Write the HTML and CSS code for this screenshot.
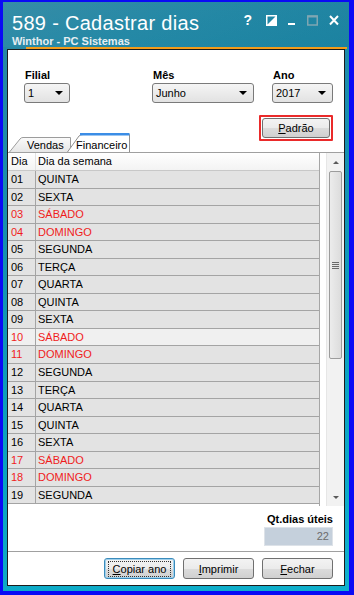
FILE: index.html
```html
<!DOCTYPE html>
<html lang="pt-BR">
<head>
    <meta charset="utf-8">
    <title>589 - Cadastrar dias</title>
    <link rel="stylesheet" href="styles.css">
</head>
<body>
    <div class="window">
        <!-- Title bar -->
        <div class="titlebar">
            <div class="title-text">
                <div class="title">589 - Cadastrar dias</div>
                <div class="subtitle">Winthor - PC Sistemas</div>
            </div>
            <div class="title-controls">
                <span class="help">?</span>
                <svg class="ctl" width="11" height="11" viewBox="0 0 11 11">
                    <rect x="0.75" y="0.75" width="9.5" height="9.5" fill="none" stroke="#fff" stroke-width="1.5"/>
                    <polygon points="1,10 10,1 10,10" fill="#fff"/>
                </svg>
                <svg class="ctl" width="8" height="11" viewBox="0 0 8 11">
                    <rect x="0" y="8" width="7" height="2" fill="#fff"/>
                </svg>
                <svg class="ctl" width="11" height="11" viewBox="0 0 11 11">
                    <rect x="0.75" y="1" width="9.5" height="9" fill="none" stroke="#7fa6b2" stroke-width="1.5"/>
                    <rect x="0.5" y="0.5" width="10" height="2" fill="#7fa6b2"/>
                </svg>
                <svg class="ctl" width="10" height="11" viewBox="0 0 10 11">
                    <path d="M1 1 L9 9.5 M9 1 L1 9.5" stroke="#fff" stroke-width="2"/>
                </svg>
            </div>
        </div>
        <div class="accent"></div>

        <!-- Window body -->
        <div class="content">
            <div class="filters">
                <div class="field filial">
                    <label>Filial</label>
                    <div class="select"><span>1</span><i class="arrow"></i></div>
                </div>
                <div class="field mes">
                    <label>Mês</label>
                    <div class="select"><span>Junho</span><i class="arrow"></i></div>
                </div>
                <div class="field ano">
                    <label>Ano</label>
                    <div class="select"><span>2017</span><i class="arrow"></i></div>
                </div>
            </div>

            <div class="tab-row">
                <div class="tabs">
                    <div class="tab">
                        <svg class="tab-shape" width="62" height="15" viewBox="0 0 62 15">
                            <defs>
                                <linearGradient id="tg" x1="0" y1="0" x2="0" y2="1">
                                    <stop offset="0" stop-color="#fbfbfb"/>
                                    <stop offset="1" stop-color="#e6e6e6"/>
                                </linearGradient>
                            </defs>
                            <path d="M0.5 15 L11 2 Q12 0.5 14 0.5 L61.5 0.5 L61.5 15" fill="url(#tg)" stroke="#9c9c9c"/>
                        </svg>
                        <span>Vendas</span>
                    </div>
                    <div class="tab active">
                        <svg class="tab-shape" width="63" height="19" viewBox="0 0 63 19">
                            <path d="M0.5 19 L12 3 Q13.5 1.5 16 1.5 L62.5 1.5 L62.5 19" fill="#fff" stroke="#8f8f8f"/>
                            <path d="M13 1.2 L62.5 1.2" stroke="#3b8de6" stroke-width="2.4"/>
                        </svg>
                        <span>Financeiro</span>
                    </div>
                </div>
                <div class="default-wrap">
                    <div class="btn"><u>P</u>adrão</div>
                </div>
            </div>

            <!-- Days grid -->
            <div class="grid">
                <div class="table">
                    <div class="row head"><div class="c1">Dia</div><div class="c2">Dia da semana</div></div>
                    <div class="row"><div class="c1">01</div><div class="c2">QUINTA</div></div>
                    <div class="row"><div class="c1">02</div><div class="c2">SEXTA</div></div>
                    <div class="row weekend"><div class="c1">03</div><div class="c2">SÁBADO</div></div>
                    <div class="row weekend"><div class="c1">04</div><div class="c2">DOMINGO</div></div>
                    <div class="row"><div class="c1">05</div><div class="c2">SEGUNDA</div></div>
                    <div class="row"><div class="c1">06</div><div class="c2">TERÇA</div></div>
                    <div class="row"><div class="c1">07</div><div class="c2">QUARTA</div></div>
                    <div class="row"><div class="c1">08</div><div class="c2">QUINTA</div></div>
                    <div class="row"><div class="c1">09</div><div class="c2">SEXTA</div></div>
                    <div class="row weekend hot"><div class="c1">10</div><div class="c2">SÁBADO</div></div>
                    <div class="row weekend"><div class="c1">11</div><div class="c2">DOMINGO</div></div>
                    <div class="row"><div class="c1">12</div><div class="c2">SEGUNDA</div></div>
                    <div class="row"><div class="c1">13</div><div class="c2">TERÇA</div></div>
                    <div class="row"><div class="c1">14</div><div class="c2">QUARTA</div></div>
                    <div class="row"><div class="c1">15</div><div class="c2">QUINTA</div></div>
                    <div class="row"><div class="c1">16</div><div class="c2">SEXTA</div></div>
                    <div class="row weekend"><div class="c1">17</div><div class="c2">SÁBADO</div></div>
                    <div class="row weekend"><div class="c1">18</div><div class="c2">DOMINGO</div></div>
                    <div class="row"><div class="c1">19</div><div class="c2">SEGUNDA</div></div>
                </div>
                <div class="scrollbar">
                    <div class="sb-btn"><i class="up"></i></div>
                    <div class="thumb"><i class="grip"></i></div>
                    <div class="track"></div>
                    <div class="sb-btn"><i class="down"></i></div>
                </div>
            </div>

            <div class="summary">
                <label>Qt.dias úteis</label>
                <div class="readonly">22</div>
            </div>

            <div class="footer">
                <div class="btn focused"><span class="focus-ring"><u>C</u>opiar ano</span></div>
                <div class="btn"><u>I</u>mprimir</div>
                <div class="btn"><u>F</u>echar</div>
            </div>
        </div>
    </div>
</body>
</html>
```

FILE: styles.css
```css
/* Base */
body {
    margin: 0;
    font-family: "Liberation Sans", Arial, sans-serif;
    font-size: 11px;
    color: #000;
    background: #fff;
}

/* Outer window frame */
.window {
    box-sizing: border-box;
    width: 354px;
    height: 595px;
    border-style: solid;
    border-color: #0a0af5;
    border-width: 2px 5px 4px 3px;
    background: linear-gradient(165deg, #2a86a2 0%, #1690b0 35%, #0aa4c2 70%, #10b0cc 100%);
    display: flex;
    flex-direction: column;
}

/* Title bar */
.titlebar {
    height: 45px;
    display: flex;
    justify-content: space-between;
    background: linear-gradient(160deg, rgba(255,255,255,0.06) 0%, rgba(255,255,255,0) 45%, rgba(0,60,90,0.12) 100%);
}

.title-text {
    padding: 9px 0 0 9px;
}

.title {
    font-size: 20px;
    line-height: 24px;
    color: #fff;
    letter-spacing: 0.3px;
}

.subtitle {
    font-weight: bold;
    font-size: 11px;
    line-height: 12px;
    color: #e6eef2;
}

.title-controls {
    display: flex;
    align-items: flex-start;
    gap: 11px;
    padding: 11px 10px 0 0;
}

.help {
    color: #fff;
    font-weight: bold;
    font-size: 14px;
    line-height: 15px;
    margin-right: 3px;
}

.ctl {
    margin-top: 2px;
}

/* Orange accent under the title */
.accent {
    height: 2px;
    margin: 0 2px 0 23px;
    background: #f39c1a;
}

/* White body */
.content {
    flex: 1;
    margin: 0 4px 5px 4px;
    background: #fff;
    border: 1px solid #1c1c1c;
    display: flex;
    flex-direction: column;
}

/* Filter selects */
.filters {
    display: flex;
    padding: 19px 11px 0 16px;
}

.field label {
    display: block;
    font-weight: bold;
    line-height: 13px;
    margin: 0 0 1px 1px;
}

.filial { width: 46px; }
.mes { width: 102px; margin-left: 82px; }
.ano { width: 61px; margin-left: 18px; }

.select {
    box-sizing: border-box;
    height: 20px;
    border: 1px solid #7a7a7a;
    border-radius: 3px;
    background: linear-gradient(#f5f5f5, #e2e2e2);
    display: flex;
    align-items: center;
    justify-content: space-between;
    padding: 0 6px 0 3px;
}

.arrow {
    width: 0;
    height: 0;
    border-left: 4px solid transparent;
    border-right: 4px solid transparent;
    border-top: 4px solid #000;
}

/* Tabs + default button row */
.tab-row {
    display: flex;
    justify-content: space-between;
    height: 37px;
    margin-top: 12px;
    padding-right: 11px;
}

.tabs {
    align-self: flex-end;
    display: flex;
    align-items: flex-end;
    margin-left: 1px;
}

.tab {
    position: relative;
    height: 15px;
    width: 62px;
    box-sizing: border-box;
    padding: 2px 0 0 18px;
    line-height: 13px;
}

.tab.active {
    height: 19px;
    width: 63px;
    margin-left: -4px;
    padding: 6px 0 0 9px;
}

.tab-shape {
    position: absolute;
    left: 0;
    top: 0;
}

.tab span {
    position: relative;
}

.default-wrap {
    align-self: flex-start;
    border: 2px solid #ea2a2a;
    padding: 1px;
    border-radius: 1px;
}

/* Push buttons */
.btn {
    box-sizing: border-box;
    width: 68px;
    height: 21px;
    border: 1px solid #707070;
    border-radius: 3px;
    background: linear-gradient(#f3f3f3 0%, #ebebeb 50%, #dcdcdc 51%, #d0d0d0 100%);
    display: flex;
    align-items: center;
    justify-content: center;
}

.default-wrap .btn {
    height: 20px;
}

/* Days grid */
.grid {
    display: flex;
    height: 353px;
    border-top: 1px solid #a0a0a0;
}

.table {
    width: 312px;
    border-right: 1px solid #a6a6a6;
    box-sizing: border-box;
    overflow: hidden;
}

.row {
    display: grid;
    grid-template-columns: 28px 1fr;
    height: 17.55px;
    box-sizing: border-box;
    border-bottom: 1px solid #a4a4a4;
    background: #e3e3e3;
    line-height: 16px;
}

.row .c1 {
    padding-left: 3px;
    border-right: 1px solid #a4a4a4;
}

.row .c2 {
    padding-left: 2px;
}

.row.head {
    height: 18px;
    background: linear-gradient(#ffffff, #f3f3f3);
    border-bottom: 1px solid #c8c8c8;
    line-height: 17px;
}

.row.head .c1 {
    border-right-color: #e2e2e2;
}

.row.weekend {
    color: #f01c1c;
}

.row.hot {
    background: #f0f0f0;
}

/* Vertical scrollbar */
.scrollbar {
    width: 17px;
    margin-left: 6px;
    display: flex;
    flex-direction: column;
    background: #f2f2f2;
    border-left: 1px solid #e6e6e6;
}

.sb-btn {
    height: 18px;
    display: flex;
    align-items: center;
    justify-content: center;
}

.up, .down {
    width: 0;
    height: 0;
    border-left: 3px solid transparent;
    border-right: 3px solid transparent;
}

.up { border-bottom: 3px solid #5a5a5a; }
.down { border-top: 3px solid #5a5a5a; }

.thumb {
    height: 186px;
    margin: 0 2px;
    border: 1px solid #9c9c9c;
    border-radius: 2px;
    background: linear-gradient(90deg, #ececec, #dcdcdc);
    display: flex;
    align-items: center;
    justify-content: center;
}

.grip {
    width: 7px;
    height: 7px;
    background: repeating-linear-gradient(#6a6a6a 0 1px, transparent 1px 2px);
}

.track {
    flex: 1;
}

/* Working days total */
.summary {
    display: flex;
    flex-direction: column;
    align-items: flex-end;
    padding: 7px 11px 0 0;
}

.summary label {
    font-weight: bold;
    line-height: 12px;
}

.readonly {
    box-sizing: border-box;
    width: 69px;
    height: 19px;
    margin-top: 2px;
    background: #c5d0dc;
    border: 1px solid #dde2e8;
    color: #6b6b6b;
    text-align: right;
    padding-right: 3px;
    line-height: 17px;
}

/* Footer buttons */
.footer {
    display: flex;
    justify-content: flex-end;
    gap: 8px;
    margin-top: 5px;
    border-top: 1px solid #a0a0a0;
    padding: 6px 11px 0 0;
}

.footer .btn {
    width: 71px;
}

.btn.focused {
    border: 1px solid #3c8cbc;
    box-shadow: inset 0 0 0 1px #9fd0ec;
}

.focus-ring {
    outline: 1px dotted #333;
    padding: 1px 4px;
}
```
